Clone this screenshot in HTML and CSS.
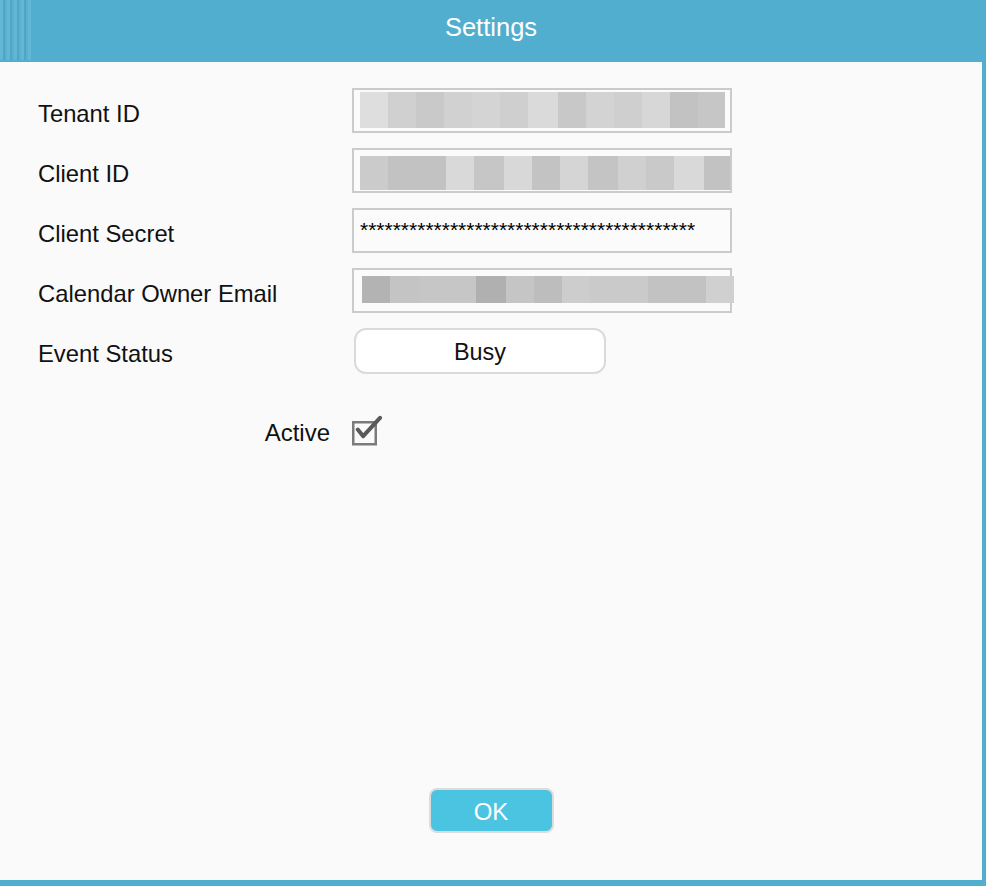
FILE: index.html
```html
<!DOCTYPE html>
<html lang="en">
<head>
<meta charset="utf-8">
<title>Settings</title>
<link rel="stylesheet" href="styles.css">
</head>
<body>
<div class="window">
  <header class="titlebar">
    <div class="grip"></div>
    <h1 class="title">Settings</h1>
  </header>
  <main class="panel">
    <div class="form">
      <div class="label">Tenant ID</div>
      <div class="field">
        <div class="blur blur-1">
          <span class="b" style="width:28px;background:#dedede"></span>
          <span class="b" style="width:28px;background:#d0d0d0"></span>
          <span class="b" style="width:28px;background:#c9c9c9"></span>
          <span class="b" style="width:28px;background:#d1d1d1"></span>
          <span class="b" style="width:28px;background:#d4d4d4"></span>
          <span class="b" style="width:28px;background:#cfcfcf"></span>
          <span class="b" style="width:30px;background:#dadada"></span>
          <span class="b" style="width:28px;background:#c8c8c8"></span>
          <span class="b" style="width:28px;background:#d3d3d3"></span>
          <span class="b" style="width:28px;background:#cfcfcf"></span>
          <span class="b" style="width:28px;background:#d7d7d7"></span>
          <span class="b" style="width:28px;background:#c2c2c2"></span>
          <span class="b" style="width:27px;background:#c6c6c6"></span>
        </div>
      </div>

      <div class="label">Client ID</div>
      <div class="field">
        <div class="blur blur-2">
          <span class="b" style="width:28px;background:#cbcbcb"></span>
          <span class="b" style="width:58px;background:#c2c2c2"></span>
          <span class="b" style="width:28px;background:#d9d9d9"></span>
          <span class="b" style="width:30px;background:#c6c6c6"></span>
          <span class="b" style="width:28px;background:#d8d8d8"></span>
          <span class="b" style="width:28px;background:#c3c3c3"></span>
          <span class="b" style="width:28px;background:#d5d5d5"></span>
          <span class="b" style="width:30px;background:#c4c4c4"></span>
          <span class="b" style="width:28px;background:#d0d0d0"></span>
          <span class="b" style="width:28px;background:#c9c9c9"></span>
          <span class="b" style="width:30px;background:#d9d9d9"></span>
          <span class="b" style="width:30px;background:#c2c2c2"></span>
        </div>
      </div>

      <div class="label">Client Secret</div>
      <div class="field">
        <div class="secret">*****************************************</div>
      </div>

      <div class="label">Calendar Owner Email</div>
      <div class="field field-open">
        <div class="blur blur-4">
          <span class="b" style="width:28px;background:#b3b3b3"></span>
          <span class="b" style="width:30px;background:#c4c4c4"></span>
          <span class="b" style="width:56px;background:#c6c6c6"></span>
          <span class="b" style="width:30px;background:#b0b0b0"></span>
          <span class="b" style="width:28px;background:#c5c5c5"></span>
          <span class="b" style="width:28px;background:#bdbdbd"></span>
          <span class="b" style="width:28px;background:#cdcdcd"></span>
          <span class="b" style="width:58px;background:#cacaca"></span>
          <span class="b" style="width:58px;background:#c2c2c2"></span>
          <span class="b" style="width:28px;background:#d0d0d0"></span>
        </div>
      </div>

      <div class="label">Event Status</div>
      <div class="select-cell">
        <button class="select" type="button">Busy</button>
      </div>
    </div>

    <div class="active-row">
      <div class="active-label">Active</div>
      <svg class="checkbox" width="34" height="32" viewBox="0 0 34 32" aria-hidden="true">
        <rect x="3.25" y="7.25" width="22.5" height="22" fill="none" stroke="#7b7b7b" stroke-width="2.5"/>
        <path d="M7.8 14.6 L13.2 21.2 L30 2.8" fill="none" stroke="#5a5a5a" stroke-width="4" stroke-linejoin="round" stroke-linecap="round"/>
      </svg>
    </div>

    <div class="footer">
      <button class="ok" type="button">OK</button>
    </div>
  </main>
</div>
</body>
</html>
```

FILE: styles.css
```css
* {
  box-sizing: border-box;
}

html, body {
  margin: 0;
  padding: 0;
}

body {
  font-family: "Liberation Sans", Arial, Helvetica, sans-serif;
  color: #111;
  background: #52aecf;
}

.window {
  width: 986px;
  height: 886px;
  background: #52aecf;
  padding: 0 4px 6px 0;
  display: flex;
  flex-direction: column;
}

.titlebar {
  height: 62px;
  flex: 0 0 62px;
  display: flex;
  align-items: center;
  justify-content: center;
  padding-bottom: 6px;
  position: relative;
}

.grip {
  position: absolute;
  left: 0;
  top: 0;
  width: 31px;
  height: 60px;
  background: repeating-linear-gradient(90deg,
    rgba(255,255,255,0.10) 0px,
    rgba(255,255,255,0.10) 3px,
    rgba(0,0,0,0.05) 3px,
    rgba(0,0,0,0.05) 5px,
    rgba(255,255,255,0.04) 5px,
    rgba(255,255,255,0.04) 7px);
}

.title {
  margin: 0;
  font-size: 25.5px;
  font-weight: normal;
  color: #ffffff;
  line-height: 1;
}

.panel {
  flex: 1;
  background: #fafafa;
  padding: 26px 0 47px 38px;
  display: flex;
  flex-direction: column;
}

.form {
  display: grid;
  grid-template-columns: 314px 380px;
  grid-auto-rows: 45px;
  row-gap: 15px;
}

.label {
  font-size: 23.8px;
  display: flex;
  align-items: center;
  padding-top: 6px;
  white-space: nowrap;
}

.field {
  border: 2px solid #c9cccb;
  background: #fbfbfb;
  overflow: hidden;
  position: relative;
}

.field-open {
  overflow: visible;
}

.blur {
  display: flex;
  margin-left: 6px;
}

.blur-1 {
  margin-top: 2px;
  height: 36px;
}

.blur-2 {
  margin-top: 6px;
  height: 34px;
}

.blur-4 {
  margin-top: 6px;
  margin-left: 8px;
  height: 27px;
}

.b {
  display: block;
  flex: 0 0 auto;
  height: 100%;
}

.secret {
  font-size: 21px;
  line-height: 21px;
  padding: 9px 0 0 6px;
  white-space: nowrap;
  color: #000;
}

.select-cell {
  display: flex;
  align-items: flex-start;
}

.select {
  width: 252px;
  height: 46px;
  margin-left: 2px;
  border: 2px solid #dadada;
  border-radius: 12px;
  background: #ffffff;
  font-family: inherit;
  font-size: 23.4px;
  color: #111;
  padding: 2px 0 0 0;
}

.active-row {
  display: grid;
  grid-template-columns: 312px auto;
  margin-top: 42px;
  height: 32px;
  align-items: center;
}

.active-label {
  font-size: 24px;
  text-align: right;
  padding-right: 20px;
  padding-top: 4px;
}

.checkbox {
  display: block;
}

.footer {
  margin-top: auto;
  display: flex;
  justify-content: center;
  padding-right: 38px;
}

.ok {
  width: 125px;
  height: 45px;
  border: 2px solid #dcdcdc;
  border-radius: 8px;
  background: #4bc4e1;
  color: #ffffff;
  font-family: inherit;
  font-size: 24px;
  padding: 2px 0 0 0;
}
```
